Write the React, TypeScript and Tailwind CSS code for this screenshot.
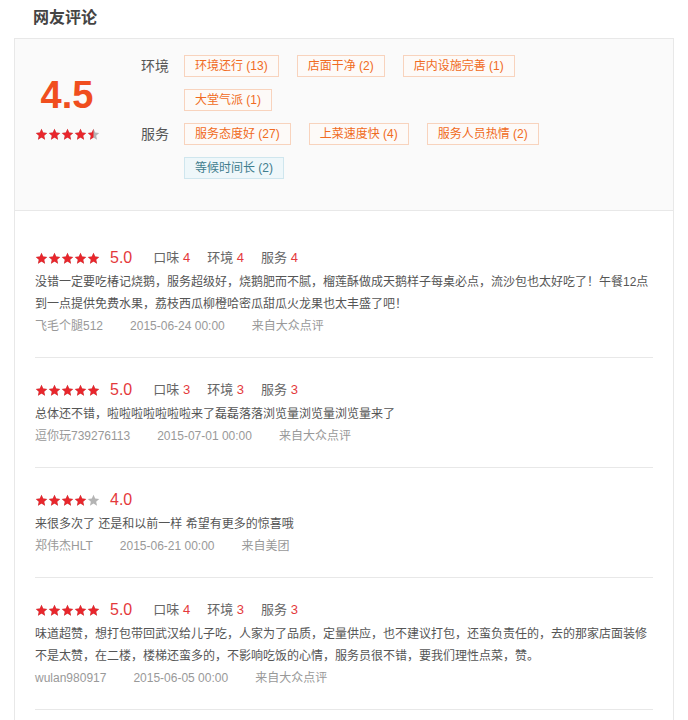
import React, { useId } from 'react'

const FONT = { fontFamily: '"Liberation Sans", "Noto Sans CJK SC", sans-serif' }

const STAR_D = 'M12 1.5l3.1 6.9 7.4.7-5.6 5 1.7 7.4L12 17.6l-6.6 3.9 1.7-7.4-5.6-5 7.4-.7z'

function Star({ fill, size }: { fill: number; size: number }) {
    const id = useId()
    return (
        <svg width={size} height={size} viewBox="0 0 24 24" className="block">
            <defs>
                <clipPath id={id}>
                    <rect x="0" y="0" width={24 * fill} height="24" />
                </clipPath>
            </defs>
            <path d={STAR_D} fill="#b4b4b4" />
            <path d={STAR_D} fill="#e8262c" clipPath={`url(#${id})`} />
        </svg>
    )
}

function Stars({ value, size = 13 }: { value: number; size?: number }) {
    return (
        <div className="flex items-center">
            {[0, 1, 2, 3, 4].map((i) => (
                <Star key={i} size={size} fill={Math.max(0, Math.min(1, value - i))} />
            ))}
        </div>
    )
}

function Tag({ text, blue }: { text: string; blue?: boolean }) {
    return (
        <span
            className={
                blue
                    ? 'h-[22px] px-[10px] text-[12px] leading-[20px] border border-[#cfe6ee] bg-[#eef7fa] text-[#3f7d8e]'
                    : 'h-[22px] px-[10px] text-[12px] leading-[20px] border border-[#f8d3bd] bg-[#fdfaf8] text-[#f06b22]'
            }
        >
            {text}
        </span>
    )
}

function TagGroup({ label, tags }: { label: string; tags: { text: string; blue?: boolean }[] }) {
    return (
        <div className="flex">
            <div className="w-[43px] h-[22px] leading-[22px] text-[14px] text-[#555] shrink-0">{label}</div>
            <div className="flex flex-wrap gap-x-[18px] gap-y-3 w-[420px]">
                {tags.map((t) => (
                    <Tag key={t.text} text={t.text} blue={t.blue} />
                ))}
            </div>
        </div>
    )
}

type Review = {
    rating: number
    scores?: [string, number][]
    lines: string
    user: string
    date: string
    from: string
}

const reviews: Review[] = [
    {
        rating: 5,
        scores: [['口味', 4], ['环境', 4], ['服务', 4]],
        lines: '没错一定要吃椿记烧鹅，服务超级好，烧鹅肥而不腻，榴莲酥做成天鹅样子每桌必点，流沙包也太好吃了！午餐12点到一点提供免费水果，荔枝西瓜柳橙哈密瓜甜瓜火龙果也太丰盛了吧！',
        user: '飞毛个腿512',
        date: '2015-06-24 00:00',
        from: '来自大众点评',
    },
    {
        rating: 5,
        scores: [['口味', 3], ['环境', 3], ['服务', 3]],
        lines: '总体还不错，啦啦啦啦啦啦啦来了磊磊落落浏览量浏览量浏览量来了',
        user: '逗你玩739276113',
        date: '2015-07-01 00:00',
        from: '来自大众点评',
    },
    {
        rating: 4,
        lines: '来很多次了 还是和以前一样 希望有更多的惊喜哦',
        user: '郑伟杰HLT',
        date: '2015-06-21 00:00',
        from: '来自美团',
    },
    {
        rating: 5,
        scores: [['口味', 4], ['环境', 3], ['服务', 3]],
        lines: '味道超赞，想打包带回武汉给儿子吃，人家为了品质，定量供应，也不建议打包，还蛮负责任的，去的那家店面装修不是太赞，在二楼，楼梯还蛮多的，不影响吃饭的心情，服务员很不错，要我们理性点菜，赞。',
        user: 'wulan980917',
        date: '2015-06-05 00:00',
        from: '来自大众点评',
    },
]

function ReviewItem({ r }: { r: Review }) {
    return (
        <div className="pt-[19px] pb-[20px] border-b border-[#e8e8e8]">
            <div className="flex items-center h-[26px]">
                <Stars value={r.rating} />
                <span className="ml-[10px] text-[16px] text-[#e4393c]">{r.rating.toFixed(1)}</span>
                {r.scores && (
                    <div className="flex ml-[21px] gap-x-[17px] text-[13px]">
                        {r.scores.map(([k, v]) => (
                            <span key={k} className="text-[#666]">
                                {k} <span className="text-[#e4393c]">{v}</span>
                            </span>
                        ))}
                    </div>
                )}
            </div>
            <p className="text-[12px] leading-[22px] text-[#555]">{r.lines}</p>
            <div className="flex text-[12px] leading-[22px] text-[#999]">
                <span className="mr-[27px]">{r.user}</span>
                <span className="mr-[27px]">{r.date}</span>
                <span>{r.from}</span>
            </div>
        </div>
    )
}

export default function App() {
    return (
        <div className="bg-white min-h-[720px]" style={FONT}>
            <div className="h-[38px] pt-[7px] pl-[33px] text-[16px] leading-[22px] font-bold text-[#444]">网友评论</div>
            <div className="mx-[14px] border border-[#e8e8e8]">
                <div className="flex bg-[#fafafa] border-b border-[#e8e8e8] pt-[16px] pb-[31px]">
                    <div className="ml-[20px] w-[64px] flex flex-col items-center">
                        <div className="mt-[18px] h-[44px] leading-[44px] text-[38px] font-bold text-[#f04e1e]">4.5</div>
                        <div className="mt-[11px]">
                            <Stars value={4.5} size={13} />
                        </div>
                    </div>
                    <div className="ml-[42px] flex flex-col gap-y-3">
                        <TagGroup
                            label="环境"
                            tags={[
                                { text: '环境还行 (13)' },
                                { text: '店面干净 (2)' },
                                { text: '店内设施完善 (1)' },
                                { text: '大堂气派 (1)' },
                            ]}
                        />
                        <TagGroup
                            label="服务"
                            tags={[
                                { text: '服务态度好 (27)' },
                                { text: '上菜速度快 (4)' },
                                { text: '服务人员热情 (2)' },
                                { text: '等候时间长 (2)', blue: true },
                            ]}
                        />
                    </div>
                </div>
                <div className="px-[20px] pt-[15px] pb-[20px]">
                    {reviews.map((r, i) => (
                        <ReviewItem key={i} r={r} />
                    ))}
                </div>
            </div>
        </div>
    )
}
